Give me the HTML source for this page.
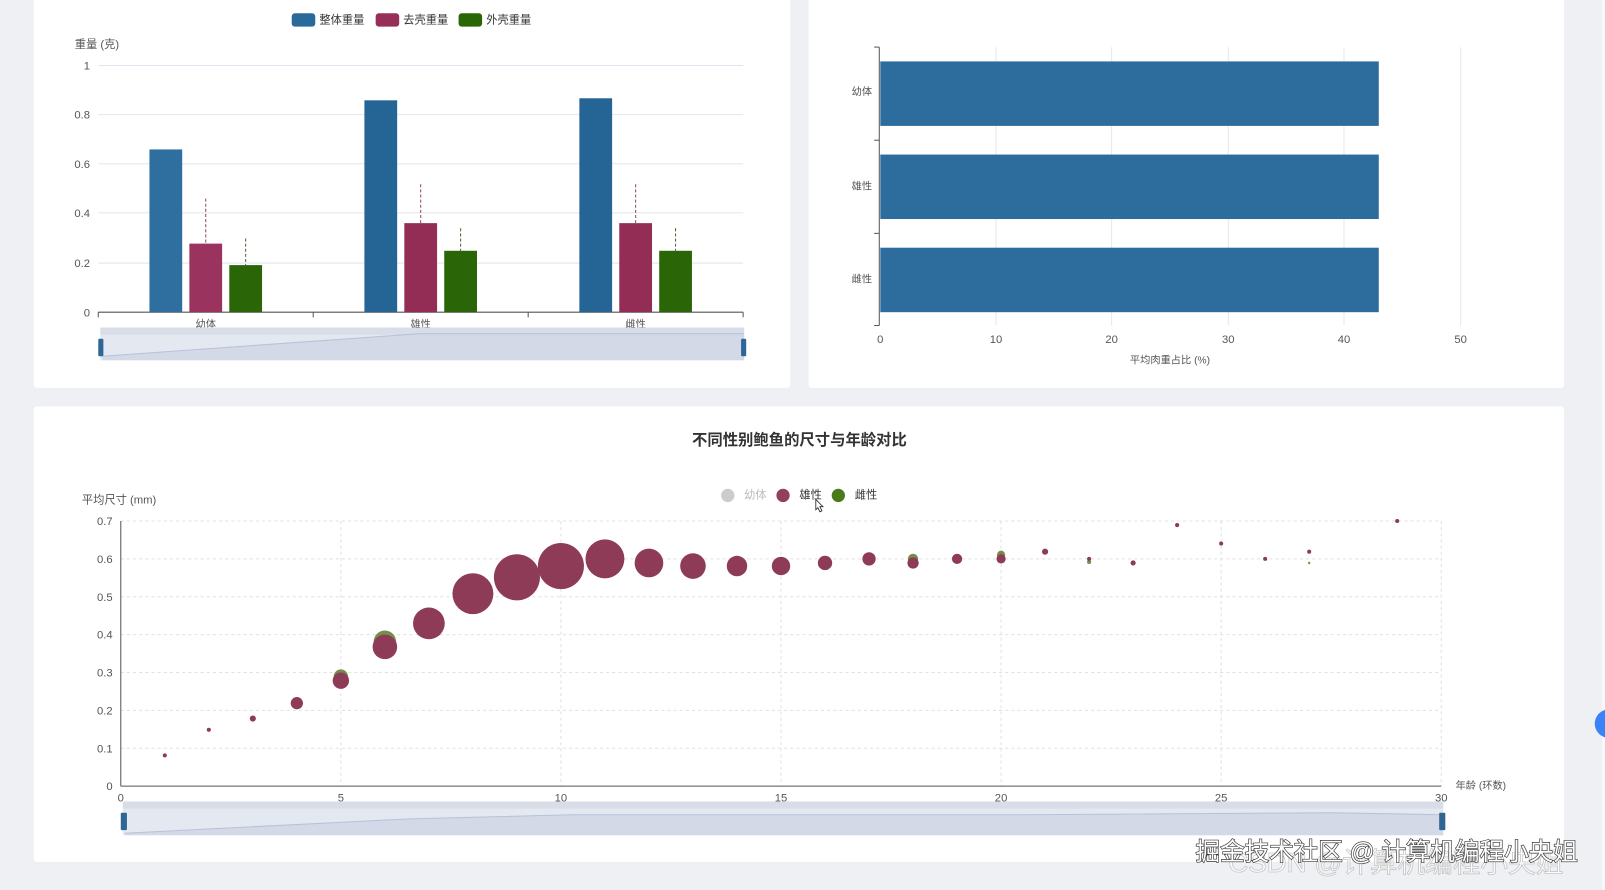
<!DOCTYPE html>
<html><head><meta charset="utf-8"><style>
html,body{margin:0;padding:0;background:#eef0f4;overflow:hidden;}
svg{display:block;font-family:"Liberation Sans","Noto Sans CJK SC",sans-serif;}
</style></head><body>
<svg width="1605" height="890" viewBox="0 0 1568 869.5" preserveAspectRatio="none" xmlns="http://www.w3.org/2000/svg">
<rect width="1568" height="870" fill="#eef0f4"/>
<rect x="1565" y="0" width="10" height="870" fill="#f7f8fa"/>
<!-- cards -->
<rect x="33" y="-5" width="739" height="384" rx="3" fill="#fff"/>
<rect x="790" y="-5" width="738" height="384" rx="3" fill="#fff"/>
<rect x="33" y="397" width="1495" height="445" rx="3" fill="#fff"/>

<!-- Chart 1 legend -->
<g font-size="11" fill="#333">
<rect x="285" y="13" width="23" height="13" rx="3" fill="#2a6a9a"/><text x="312" y="23">整体重量</text>
<rect x="367" y="13" width="23" height="13" rx="3" fill="#973059"/><text x="394" y="23">去壳重量</text>
<rect x="448" y="13" width="23" height="13" rx="3" fill="#2a6607"/><text x="475" y="23">外壳重量</text>
</g>
<text x="73" y="47" font-size="11" fill="#555">重量 (克)</text>
<g stroke="#e0e6f1" stroke-width="1">
<line x1="96" y1="64" x2="726" y2="64"/><line x1="96" y1="112" x2="726" y2="112"/>
<line x1="96" y1="160" x2="726" y2="160"/><line x1="96" y1="208" x2="726" y2="208"/>
<line x1="96" y1="257" x2="726" y2="257"/>
</g>
<g font-size="11" fill="#555" text-anchor="end">
<text x="88" y="68">1</text><text x="88" y="116">0.8</text><text x="88" y="164">0.6</text>
<text x="88" y="212">0.4</text><text x="88" y="261">0.2</text><text x="88" y="309">0</text>
</g>
<line x1="96" y1="305" x2="726" y2="305" stroke="#555"/>
<g stroke="#555"><line x1="96" y1="305" x2="96" y2="310"/><line x1="306" y1="305" x2="306" y2="310"/><line x1="516" y1="305" x2="516" y2="310"/><line x1="726" y1="305" x2="726" y2="310"/></g>
<!-- bars -->
<rect x="146" y="146" width="32" height="159" fill="#2f6f9f"/>
<rect x="185" y="238" width="32" height="67" fill="#9a335d"/>
<rect x="224" y="259" width="32" height="46" fill="#2a6607"/>
<rect x="356" y="98" width="32" height="207" fill="#246595"/>
<rect x="395" y="218" width="32" height="87" fill="#932d55"/>
<rect x="434" y="245" width="32" height="60" fill="#2a6607"/>
<rect x="566" y="96" width="32" height="209" fill="#246595"/>
<rect x="605" y="218" width="32" height="87" fill="#932d55"/>
<rect x="644" y="245" width="32" height="60" fill="#2a6607"/>
<g stroke-dasharray="3,2" stroke-width="1">
<line x1="201" y1="194" x2="201" y2="238" stroke="#8a4a5a"/>
<line x1="240" y1="233" x2="240" y2="259" stroke="#5a5a3a"/>
<line x1="411" y1="180" x2="411" y2="218" stroke="#8a4a5a"/>
<line x1="450" y1="223" x2="450" y2="245" stroke="#5a5a3a"/>
<line x1="621" y1="180" x2="621" y2="218" stroke="#8a4a5a"/>
<line x1="660" y1="223" x2="660" y2="245" stroke="#5a5a3a"/>
</g>
<g font-size="10" fill="#555" text-anchor="middle">
<text x="201" y="320">幼体</text><text x="411" y="320">雄性</text><text x="621" y="320">雌性</text>
</g>
<!-- dataZoom 1 -->
<rect x="98" y="320" width="629" height="32" fill="#e4e8f0"/>
<rect x="98" y="320" width="629" height="7" fill="#d8dde8"/>
<path d="M100 348 L410 326 L727 326 L727 352 L100 352 Z" fill="#d3d9e7"/>
<path d="M100 348 L410 326 L727 326" fill="none" stroke="#b8c2d8"/>
<rect x="96" y="331" width="5" height="17" rx="1" fill="#2e6696"/>
<rect x="724" y="331" width="5" height="17" rx="1" fill="#2e6696"/>

<!-- Chart 2 -->
<g stroke="#e8e8e8"><line x1="973" y1="46" x2="973" y2="318"/><line x1="1086" y1="46" x2="1086" y2="318"/><line x1="1200" y1="46" x2="1200" y2="318"/><line x1="1313" y1="46" x2="1313" y2="318"/><line x1="1427" y1="46" x2="1427" y2="318"/></g>
<line x1="859" y1="46" x2="859" y2="318" stroke="#555"/>
<g stroke="#555"><line x1="854" y1="46" x2="859" y2="46"/><line x1="854" y1="137" x2="859" y2="137"/><line x1="854" y1="228" x2="859" y2="228"/><line x1="854" y1="318" x2="859" y2="318"/></g>
<rect x="860" y="60" width="487" height="63" fill="#2c6d9d"/>
<rect x="860" y="151" width="487" height="63" fill="#2c6d9d"/>
<rect x="860" y="242" width="487" height="63" fill="#2c6d9d"/>
<g font-size="10" fill="#555" text-anchor="end"><text x="852" y="93">幼体</text><text x="852" y="185">雄性</text><text x="852" y="276">雌性</text></g>
<g font-size="11" fill="#555" text-anchor="middle"><text x="860" y="335">0</text><text x="973" y="335">10</text><text x="1086" y="335">20</text><text x="1200" y="335">30</text><text x="1313" y="335">40</text><text x="1427" y="335">50</text>
<text x="1143" y="355" font-size="10">平均肉重占比 (%)</text></g>

<!-- Chart 3 -->
<text x="781" y="435" font-size="15" font-weight="bold" fill="#333" text-anchor="middle">不同性别鲍鱼的尺寸与年龄对比</text>
<g font-size="11">
<circle cx="711" cy="484" r="6.5" fill="#ccc"/><text x="727" y="487" fill="#bbb">幼体</text>
<circle cx="765" cy="484" r="6.5" fill="#93405a"/><text x="781" y="487" fill="#333">雄性</text>
<circle cx="819" cy="484" r="6.5" fill="#4a7a1a"/><text x="835" y="487" fill="#333">雌性</text>
</g>
<path d="M797 488 l0 10 l2 -2 l2 4 l2 -1 l-2 -4 l3 0 z" fill="#fff" stroke="#222" stroke-width="0.8"/>
<text x="80" y="492" font-size="11" fill="#555">平均尺寸 (mm)</text>
<g stroke="#e0e0e0" stroke-dasharray="3,3">
<line x1="118" y1="509" x2="1408" y2="509"/><line x1="118" y1="546" x2="1408" y2="546"/><line x1="118" y1="583" x2="1408" y2="583"/><line x1="118" y1="620" x2="1408" y2="620"/><line x1="118" y1="657" x2="1408" y2="657"/><line x1="118" y1="694" x2="1408" y2="694"/><line x1="118" y1="731" x2="1408" y2="731"/>
<line x1="333" y1="509" x2="333" y2="768"/><line x1="548" y1="509" x2="548" y2="768"/><line x1="763" y1="509" x2="763" y2="768"/><line x1="978" y1="509" x2="978" y2="768"/><line x1="1193" y1="509" x2="1193" y2="768"/><line x1="1408" y1="509" x2="1408" y2="768"/>
</g>
<g font-size="11" fill="#555" text-anchor="end">
<text x="110" y="513">0.7</text><text x="110" y="550">0.6</text><text x="110" y="587">0.5</text><text x="110" y="624">0.4</text><text x="110" y="661">0.3</text><text x="110" y="698">0.2</text><text x="110" y="735">0.1</text><text x="110" y="772">0</text>
</g>
<line x1="118" y1="509" x2="118" y2="768" stroke="#555"/>
<line x1="118" y1="768" x2="1408" y2="768" stroke="#555"/>
<g font-size="11" fill="#555" text-anchor="middle">
<text x="118" y="783">0</text><text x="333" y="783">5</text><text x="548" y="783">10</text><text x="763" y="783">15</text><text x="978" y="783">20</text><text x="1193" y="783">25</text><text x="1408" y="783">30</text>
</g>
<text x="1422" y="771" font-size="10" fill="#555">年龄 (环数)</text>
<g fill="#5f7a2a" opacity="0.85">
<circle cx="333" cy="661" r="7"/><circle cx="376" cy="627" r="11"/><circle cx="892" cy="546" r="5"/><circle cx="978" cy="542" r="4"/><circle cx="1064" cy="549" r="2"/><circle cx="1279" cy="550" r="1.2"/>
</g>
<g fill="#8e3b58">
<circle cx="161" cy="738" r="2"/><circle cx="204" cy="713" r="2"/><circle cx="247" cy="702" r="3"/><circle cx="290" cy="687" r="6"/>
<circle cx="333" cy="665" r="8"/><circle cx="376" cy="632" r="12"/><circle cx="419" cy="609" r="15.5"/><circle cx="462" cy="580" r="20"/>
<circle cx="505" cy="564" r="22.5"/><circle cx="548" cy="553" r="22.5"/><circle cx="591" cy="546" r="19"/><circle cx="634" cy="550" r="14"/>
<circle cx="677" cy="553" r="12.5"/><circle cx="720" cy="553" r="10"/><circle cx="763" cy="553" r="9"/><circle cx="806" cy="550" r="7"/>
<circle cx="849" cy="546" r="6.5"/><circle cx="892" cy="550" r="5.5"/><circle cx="935" cy="546" r="5"/><circle cx="978" cy="546" r="4.5"/>
<circle cx="1021" cy="539" r="3"/><circle cx="1064" cy="546" r="2"/><circle cx="1107" cy="550" r="2.5"/><circle cx="1150" cy="513" r="2"/>
<circle cx="1193" cy="531" r="2"/><circle cx="1236" cy="546" r="2"/><circle cx="1279" cy="539" r="2"/><circle cx="1365" cy="509" r="2"/>
</g>
<!-- dataZoom 3 -->
<rect x="120" y="783" width="1290" height="33" fill="#e4e8f0"/>
<rect x="120" y="783" width="1290" height="7" fill="#d8dde8"/>
<path d="M122 814 L400 800 L560 796 L1000 796 L1300 794 L1410 796 L1410 816 L122 816 Z" fill="#d3d9e7"/>
<path d="M122 814 L400 800 L560 796 L1000 796 L1300 794 L1410 796" fill="none" stroke="#b8c2d8"/>
<rect x="118" y="794" width="6" height="17" rx="1" fill="#2e6696"/>
<rect x="1406" y="794" width="6" height="17" rx="1" fill="#2e6696"/>

<circle cx="1572" cy="707" r="14" fill="#3b82f6"/>
<text x="1200" y="852" font-size="27" fill="#fff" stroke="#bbb" stroke-width="0.8" opacity="0.8">CSDN @计算机编程小央姐</text>
<text x="1168" y="840" font-size="24" fill="#fff" stroke="#333" stroke-width="1.3" paint-order="stroke">掘金技术社区 @ 计算机编程小央姐</text>
</svg>
</body></html>
